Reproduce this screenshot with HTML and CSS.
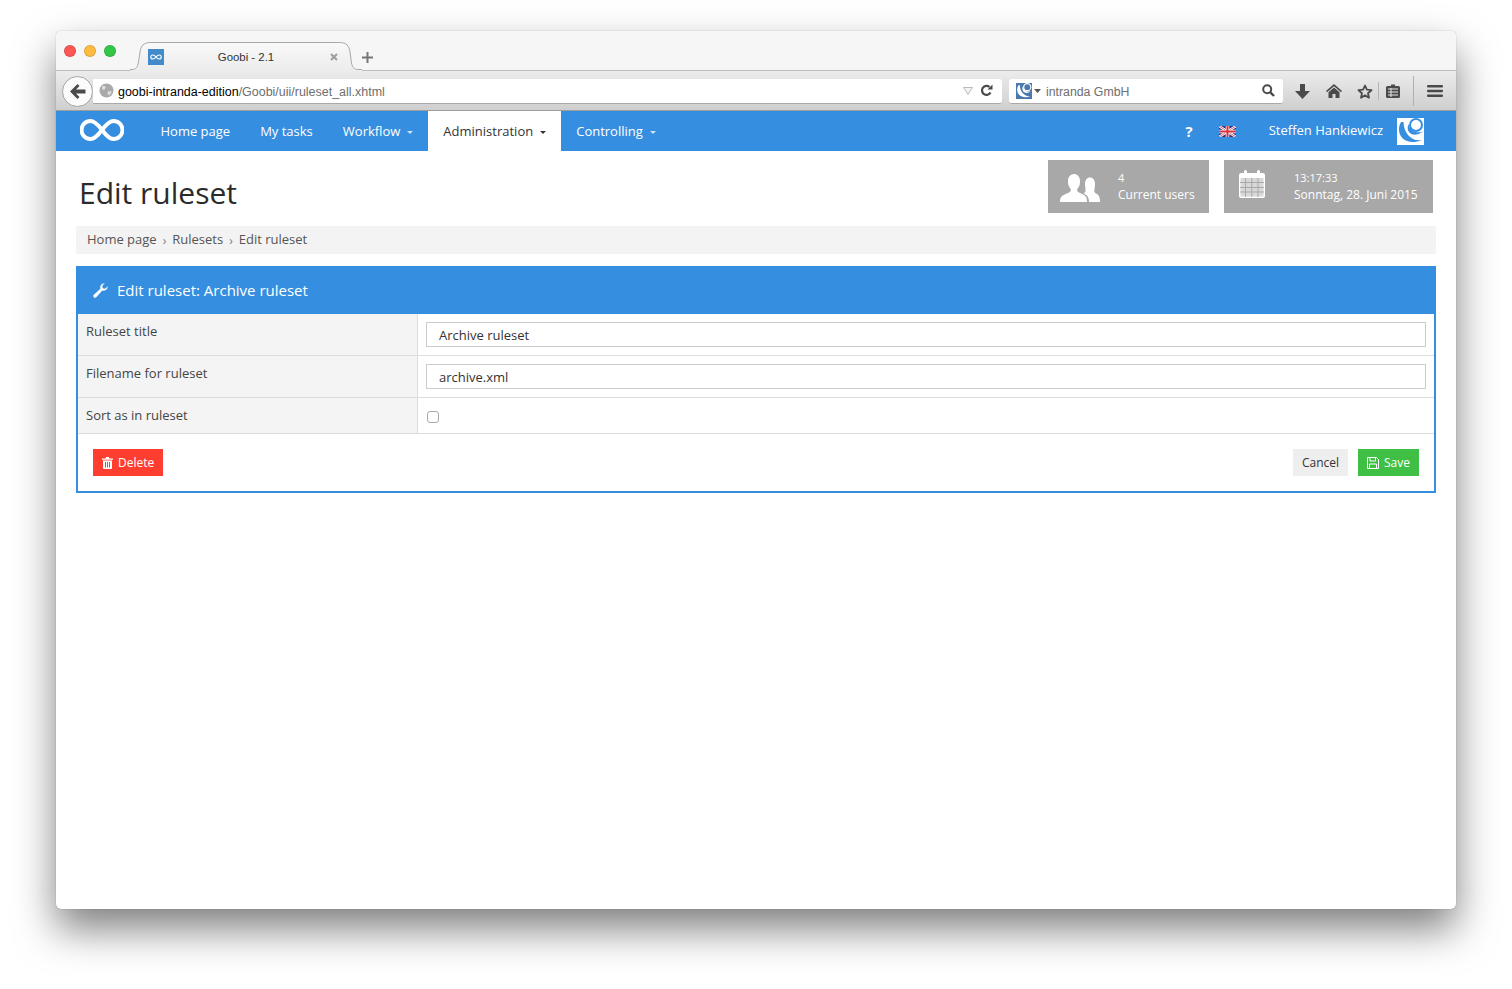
FILE: index.html
```html
<!DOCTYPE html>
<html lang="en">
<head>
<meta charset="utf-8">
<title>Goobi - 2.1</title>
<link rel="stylesheet" href="styles.css">
</head>
<body>
<div class="window">
  <div class="tabstrip">
    <span class="light red"></span><span class="light yellow"></span><span class="light green"></span>
    <div class="tab">
      <svg class="tab-shape" width="232" height="29" viewBox="0 0 232 29"><defs><linearGradient id="tabfill" x1="0" y1="0" x2="0" y2="1"><stop offset="0" stop-color="#f9f9f9"/><stop offset="1" stop-color="#ececec"/></linearGradient></defs><path d="M0 28H2C6 28 7.500 25 8.500 20L10 10C11 4 13 .5 21 .5H209C217 .5 219 4 220 10L221.500 21C222.500 25 224 28 228 28H232V29H0Z" fill="url(#tabfill)"/><path d="M0 27.500H2C6 27.500 7.500 25 8.500 20L10 10C11 4 13 .5 21 .5H209C217 .5 219 4 220 10L221.500 21C222.500 25 224 27.500 228 27.500H232" fill="none" stroke="#a8a8a8"/></svg>
      <span class="favicon"><svg width="16" height="16" viewBox="0 0 16 16"><path d="M8 8C6.800 6.500 5.800 6 4.800 6A2 2 0 0 0 4.800 10C5.800 10 6.800 9.500 8 8C9.200 6.500 10.200 6 11.200 6A2 2 0 0 1 11.200 10C10.200 10 9.200 9.500 8 8Z" fill="none" stroke="#fff" stroke-width="1.100"/></svg></span>
      <span class="tab-title">Goobi - 2.1</span>
      <svg class="tab-close" width="8" height="8" viewBox="0 0 8 8"><path d="M1 1 7 7M7 1 1 7" stroke="#a0a0a0" stroke-width="2.200"/></svg>
    </div>
    <svg class="newtab" width="11" height="11" viewBox="0 0 11 11"><path d="M5.500 0V11M0 5.500H11" stroke="#777" stroke-width="2"/></svg>
  </div>
  <div class="toolbar">
    <div class="urlbar">
      <svg class="globe" width="15" height="15" viewBox="0 0 15 15"><circle cx="7.500" cy="7.500" r="7" fill="#a9a9a9"/><path d="M3 3.500C5 2 6 3 7 4.500L5 7 3 6ZM9 8l4 .5-2.500 4L8.500 11Z" fill="#dcdcdc"/></svg>
      <span class="url"><b>goobi-intranda-edition</b>/Goobi/uii/ruleset_all.xhtml</span>
      <svg class="urldrop" width="10" height="8" viewBox="0 0 10 8"><path d="M.5.500H9.500L5 7.500Z" fill="#f2f2f2" stroke="#bbb"/></svg>
      <svg width="13" height="13" viewBox="0 0 13 13"><path d="M10.500 8.500A4.500 4.500 0 1 1 9.500 3" fill="none" stroke="#4a4a4a" stroke-width="2.200"/><path d="M7.500 5.500H12.500V.5Z" fill="#4a4a4a"/></svg>
    </div>
    <button class="back" type="button" aria-label="Back"><svg width="16" height="15" viewBox="0 0 16 15"><path d="M7.500 0 9.500 2 6 5.500H15.500V9.500H6L9.500 13 7.500 15 0 7.500Z" fill="#4a4a4a"/></svg></button>
    <div class="searchbar">
      <span class="engine"><svg width="16" height="16" viewBox="0 0 27 27"><rect width="27" height="27" fill="#4c79ad"/><circle cx="19" cy="7" r="6" fill="none" stroke="#fff" stroke-width="2"/><path d="M4 4C-3 17 9 29 25 22C15 24 7 16 6.500 4ZM11.500 6C8 14 16 21 26 13.500C19 16 13 13 11.500 6Z" fill="#fff"/></svg></span>
      <svg class="enginedrop" width="7" height="4" viewBox="0 0 7 4"><path d="M0 0H7L3.500 4Z" fill="#555"/></svg>
      <span class="search-text">intranda GmbH</span>
      <svg width="13" height="13" viewBox="0 0 13 13"><circle cx="5.200" cy="5.200" r="4" fill="none" stroke="#4a4a4a" stroke-width="2"/><path d="M8 8 12 12" stroke="#4a4a4a" stroke-width="2.400"/></svg>
    </div>
    <div class="tools">
      <svg class="t-down" width="15" height="15" viewBox="0 0 15 15"><path d="M5 0H10V7H15L7.500 15 0 7H5Z" fill="#4a4a4a"/></svg>
      <svg class="t-home" width="16" height="14" viewBox="0 0 16 14"><path d="M8 0 16 7 15 8.200 8 2.200 1 8.200 0 7ZM8 3.500 13.500 8.200V14H9.500V10H6.500V14H2.500V8.200Z" fill="#4a4a4a"/></svg>
      <svg class="t-star" width="16" height="15" viewBox="0 0 16 15"><path d="M8 1.500 9.900 5.700 14.500 6.200 11 9.200 12 13.700 8 11.400 4 13.700 5 9.200 1.500 6.200 6.100 5.700Z" fill="none" stroke="#4a4a4a" stroke-width="1.800" stroke-linejoin="round"/></svg>
      <i class="t-sep1"></i>
      <svg class="t-clip" width="14" height="14" viewBox="0 0 14 14"><path d="M5 2V.5H9V2H12.500A1.500 1.500 0 0 1 14 3.500V12.500A1.500 1.500 0 0 1 12.500 14H1.500A1.500 1.500 0 0 1 0 12.500V3.500A1.500 1.500 0 0 1 1.500 2Z" fill="#4a4a4a"/><path d="M2 5H12M2 8H12M2 11H12" stroke="#e6e6e6" stroke-width="1.200"/><path d="M5 4V13" stroke="#e6e6e6"/></svg>
      <i class="t-sep2"></i>
      <svg class="t-menu" width="16" height="12" viewBox="0 0 16 12"><rect width="16" height="2.600" rx="1" fill="#4a4a4a"/><rect y="4.700" width="16" height="2.600" rx="1" fill="#4a4a4a"/><rect y="9.400" width="16" height="2.600" rx="1" fill="#4a4a4a"/></svg>
    </div>
  </div>
  <nav class="nav">
    <svg class="logo" width="44" height="24" viewBox="0 0 44 24"><path d="M22 12C17.500 6 14 3 10.500 3A8.800 8.800 0 0 0 10.500 21C14 21 17.500 18 22 12C26.500 6 30 3 33.500 3A8.800 8.800 0 0 1 33.500 21C30 21 26.500 18 22 12Z" fill="none" stroke="#fff" stroke-width="4"/></svg>
    <a class="nav-item">Home page</a>
    <a class="nav-item">My tasks</a>
    <a class="nav-item caret">Workflow</a>
    <a class="nav-item caret active">Administration</a>
    <a class="nav-item caret">Controlling</a>
    <span class="nav-right">
      <span class="help">?</span>
      <svg class="flag" width="17" height="11" viewBox="0 0 17 11"><rect width="17" height="11" fill="#2b2f7c"/><path d="M0 0 17 11M17 0 0 11" stroke="#fff" stroke-width="2.400"/><path d="M0 0 17 11M17 0 0 11" stroke="#d7313d" stroke-width=".8"/><path d="M8.500 0V11M0 5.500H17" stroke="#fff" stroke-width="3.600"/><path d="M8.500 0V11M0 5.500H17" stroke="#d7313d" stroke-width="2"/></svg>
      <span class="user">Steffen Hankiewicz</span>
      <span class="avatar"><svg width="27" height="27" viewBox="0 0 27 27"><rect width="27" height="27" fill="#fff"/><circle cx="19" cy="7" r="6" fill="none" stroke="#368ee0" stroke-width="2"/><path d="M4 4C-3 17 9 29 25 22C15 24 7 16 6.500 4ZM11.500 6C8 14 16 21 26 13.500C19 16 13 13 11.500 6Z" fill="#368ee0"/></svg></span>
    </span>
  </nav>
  <main class="content">
    <header class="page-head">
      <h1>Edit ruleset</h1>
      <div class="stat stat-users">
        <svg width="40" height="28" viewBox="0 0 40 28"><path d="M0 28C0 22 3 21 8 19C11 18 11.500 16 10 14C8 11.500 8 9 8 7C8 3 10.500 0 14 0S20 3 20 7C20 9 20 11.500 18 14C16.500 16 17 18 20 19C25 21 27 22 27 28Z" fill="#fff"/><path d="M29 28C29 23 27 21 23.500 19.500C27 18 25 15 25 10C25 6 27 3.500 30 3.500S35 6 35 10C35 15 33 18 36 19.500C39 21 40 23 40 28Z" fill="#fff"/></svg>
        <span class="stat-text stat-text-users"><small>4</small><span>Current users</span></span>
      </div>
      <div class="stat stat-date">
        <svg width="26" height="28" viewBox="0 0 26 28"><path d="M2 3H5V1.500A1.500 1.500 0 0 1 8 1.500V3H18V1.500A1.500 1.500 0 0 1 21 1.500V3H24A2 2 0 0 1 26 5V26A2 2 0 0 1 24 28H2A2 2 0 0 1 0 26V5A2 2 0 0 1 2 3Z" fill="#fff"/><rect x="1.500" y="8" width="23" height="18.500" fill="#d8d8d8"/><path d="M6.500 8V27M12.800 8V27M19 8V27M1 12.500H25M1 17.500H25M1 22H25" stroke="#a9a9a9"/></svg>
        <span class="stat-text stat-text-date"><small>13:17:33</small><span>Sonntag, 28. Juni 2015</span></span>
      </div>
    </header>
    <ol class="crumbs">
      <li>Home page</li><li class="sep">›</li><li>Rulesets</li><li class="sep">›</li><li>Edit ruleset</li>
    </ol>
    <section class="panel">
      <h2 class="panel-title">
        <svg width="15" height="15" viewBox="0 0 15 15"><path d="M14.700 3.300A4.200 4.200 0 0 1 9.300 7.600L3.300 14.200A1.700 1.700 0 0 1 .8 11.800L7.400 5.700A4.200 4.200 0 0 1 11.700.3L9.300 2.800 9.700 5.300 12.200 5.700Z" fill="#fff"/></svg>
        Edit ruleset: Archive ruleset
      </h2>
      <div class="row">
        <div class="label">Ruleset title</div>
        <div class="field"><input class="input" type="text" value="Archive ruleset"></div>
      </div>
      <div class="row">
        <div class="label">Filename for ruleset</div>
        <div class="field"><input class="input" type="text" value="archive.xml"></div>
      </div>
      <div class="row row-check">
        <div class="label">Sort as in ruleset</div>
        <div class="field"><span class="check"></span></div>
      </div>
      <div class="actions">
        <button class="btn btn-delete" type="button"><svg width="11" height="12" viewBox="0 0 11 12"><path d="M3.500 1.500 4.200 0H6.800L7.500 1.500H11V2.700H0V1.500ZM1 3.500H10V11A1 1 0 0 1 9 12H2A1 1 0 0 1 1 11Z" fill="#fff"/><path d="M3.500 5V10.500M5.500 5V10.500M7.500 5V10.500" stroke="#ff3e30"/></svg>Delete</button>
        <span class="spacer"></span>
        <button class="btn btn-cancel" type="button">Cancel</button>
        <button class="btn btn-save" type="button"><svg width="12" height="12" viewBox="0 0 12 12"><path d="M.5.500H9.500L11.500 2.500V11.500H.5Z" fill="none" stroke="#fff"/><path d="M3 .5V4H8.500V.5M2.500 11.500V7H9.500V11.500" fill="none" stroke="#fff"/></svg>Save</button>
      </div>
    </section>
  </main>
</div>
</body>
</html>
```

FILE: styles.css
```css
* { box-sizing: border-box; }
html, body { margin: 0; height: 100%; background: #fff; overflow: hidden; }
body { padding: 31px 56px 80px; font-family: "Open Sans", sans-serif; }

.window {
  height: 878px;
  display: flex;
  flex-direction: column;
  background: #fff;
  border-radius: 5px;
  box-shadow: 0 0 1px rgba(0,0,0,.45), 0 20px 40px 0 rgba(0,0,0,.5);
  overflow: hidden;
}

.tabstrip {
  height: 40px;
  flex: none;
  display: flex;
  align-items: flex-start;
  background: #f6f6f6;
  border-bottom: 1px solid #bcbcbc;
  padding: 14px 0 0 8px;
  position: relative;
}
.light { width: 12px; height: 12px; border-radius: 50%; margin-right: 8px; border: 1px solid rgba(0,0,0,.12); }
.red { background: #fc5753; }
.yellow { background: #fdbc40; }
.green { background: #33c748; }
.tab {
  position: absolute;
  left: 74px;
  top: 11px;
  width: 232px;
  height: 29px;
  display: flex;
  align-items: center;
  padding: 0 0 0 18px;
}
.tab-shape { position: absolute; left: 0; top: 0; }
.favicon {
  position: relative;
  width: 16px;
  height: 16px;
  background: #428bca;
  display: flex;
}
.tab-title {
  position: relative;
  width: 148px;
  text-align: center;
  margin-left: 8px;
  font: 11.400px "Liberation Sans", sans-serif;
  color: #333;
}
.tab-close { position: relative; margin-left: 10px; }
.newtab { position: absolute; left: 306px; top: 21px; }

.toolbar {
  height: 40px;
  flex: none;
  display: flex;
  align-items: center;
  background: linear-gradient(#ececec, #cfcfcf);
  border-bottom: 1px solid #9e9e9e;
  padding: 1px 0 0 6px;
  position: relative;
}
.urlbar {
  width: 909px;
  height: 25px;
  background: #fff;
  border-bottom: 1px solid #a9a9a9;
  border-radius: 0 3px 3px 0;
  display: flex;
  align-items: center;
  padding: 0 9px 0 15px;
  margin-right: 7px;
  margin-left: 31px;
}
.back {
  position: absolute;
  left: 6px;
  top: 5px;
  width: 31px;
  height: 31px;
  border-radius: 50%;
  border: 1px solid #a5a5a5;
  background: #fbfbfb;
  padding: 0;
  display: flex;
  align-items: center;
  justify-content: center;
}
.globe { margin-left: -9px; margin-right: 4px; }
.url { flex: 1; margin-top: 2px; font: 12.480px "Liberation Sans", sans-serif; color: #6e6e6e; }
.url b { font-weight: normal; color: #000; }
.urldrop { margin-right: 7px; }
.searchbar {
  width: 274px;
  height: 25px;
  background: #fff;
  border-bottom: 1px solid #a9a9a9;
  border-radius: 3px;
  display: flex;
  align-items: center;
  padding: 0 8px 0 7px;
}
.engine { display: flex; }
.enginedrop { margin: 0 5px 0 2px; }
.search-text { flex: 1; margin-top: 2px; font: 12.300px "Liberation Sans", sans-serif; color: #6e6e6e; }
.tools { display: flex; align-items: center; flex: 1; height: 30px; }
.t-down { margin-left: 12px; }
.t-home { margin-left: 16px; }
.t-star { margin-left: 15px; }
.t-sep1 { width: 1px; height: 18px; background: #b5b5b5; margin-left: 5px; }
.t-clip { margin-left: 7px; }
.t-sep2 { width: 1px; height: 30px; background: #b0b0b0; margin-left: 13px; }
.t-menu { margin-left: 13px; }

.nav {
  height: 40px;
  flex: none;
  display: flex;
  align-items: center;
  background: #368ee0;
  color: #fff;
  padding-left: 24px;
  font-size: 13px;
}
.logo { margin-right: 21.500px; margin-top: -3px; }
.nav-item {
  height: 40px;
  line-height: 40px;
  padding: 0 15px;
  color: #fff;
  display: flex;
  align-items: center;
}
.nav-item.caret::after {
  content: "";
  margin-left: 7px;
  margin-top: 2px;
  border: 3px solid transparent;
  border-top-color: #cfe3f7;
  border-bottom: 0;
}
.nav-item.active { background: #fff; color: #333; }
.nav-item.active::after { border-top-color: #333; }
.nav-right { margin-left: auto; display: flex; align-items: center; padding-right: 32px; }
.help { font-weight: 700; font-size: 15px; margin-right: 26px; }
.flag { margin-right: 33px; margin-top: 1px; }
.user { margin-right: 14px; margin-top: -3px; }
.avatar { display: flex; margin-top: 1px; }

.content { flex: 1; padding: 9px 20px 0; color: #333; }
.page-head { display: flex; align-items: flex-start; height: 66px; }
h1 { margin: 13px auto 0 3px; font-size: 30px; font-weight: 400; line-height: 40px; color: #2b2b2b; }
.stat {
  height: 53px;
  background: #a8a8a8;
  color: #fff;
  display: flex;
  font-size: 12px;
}
.stat-users { width: 161px; padding: 14px 0 0 12px; margin-right: 15px; }
.stat-date { width: 209px; padding: 10px 0 0 15px; margin-right: 3px; }
.stat-text { display: flex; flex-direction: column; line-height: 17px; }
.stat-text small { font-size: 11px; }
.stat-text-users { margin: -5px 0 0 18px; }
.stat-text-date { margin: -1px 0 0 29px; }

.crumbs {
  list-style: none;
  margin: 0 0 12px;
  padding: 0 11px 3px;
  height: 28px;
  background: #f3f3f3;
  display: flex;
  align-items: center;
  font-size: 13px;
  color: #555;
}
.crumbs .sep { margin: 3px 6px 0; font-size: 12px; color: #777; }

.panel { border: 2px solid #368ee0; border-top: 0; }
.panel-title {
  margin: 0 -2px;
  height: 48px;
  background: #368ee0;
  color: #fff;
  font-size: 15px;
  font-weight: 400;
  display: flex;
  align-items: center;
  gap: 9px;
  padding-left: 17px;
}
.row { display: flex; height: 42px; border-bottom: 1px solid #ddd; font-size: 13px; }
.row-check { height: 36px; }
.label { width: 340px; background: #f4f4f4; border-right: 1px solid #ddd; padding: 8px 8px 0; color: #444; line-height: 18px; }
.field { flex: 1; padding: 8px 8px 0; }
.input {
  display: block;
  width: 1000px;
  height: 25px;
  border: 1px solid #ccc;
  padding: 0 12px;
  font: 13px "Open Sans", sans-serif;
  color: #333;
  background: #fff;
}
.check {
  display: block;
  width: 12px;
  height: 12px;
  margin: 5px 0 0 1px;
  border: 1px solid #aaa;
  border-radius: 3px;
  background: #fff;
}
.actions { display: flex; padding: 15px; height: 57px; }
.spacer { flex: 1; }
.btn {
  height: 27px;
  border: 0;
  padding: 0 9px;
  font: 12px "Open Sans", sans-serif;
  display: flex;
  align-items: center;
  gap: 5px;
}
.btn-delete { background: #ff3e30; color: #fff; }
.btn-cancel { background: #eee; color: #333; margin-right: 10px; }
.btn-save { background: #3fbf43; color: #fff; }
```
